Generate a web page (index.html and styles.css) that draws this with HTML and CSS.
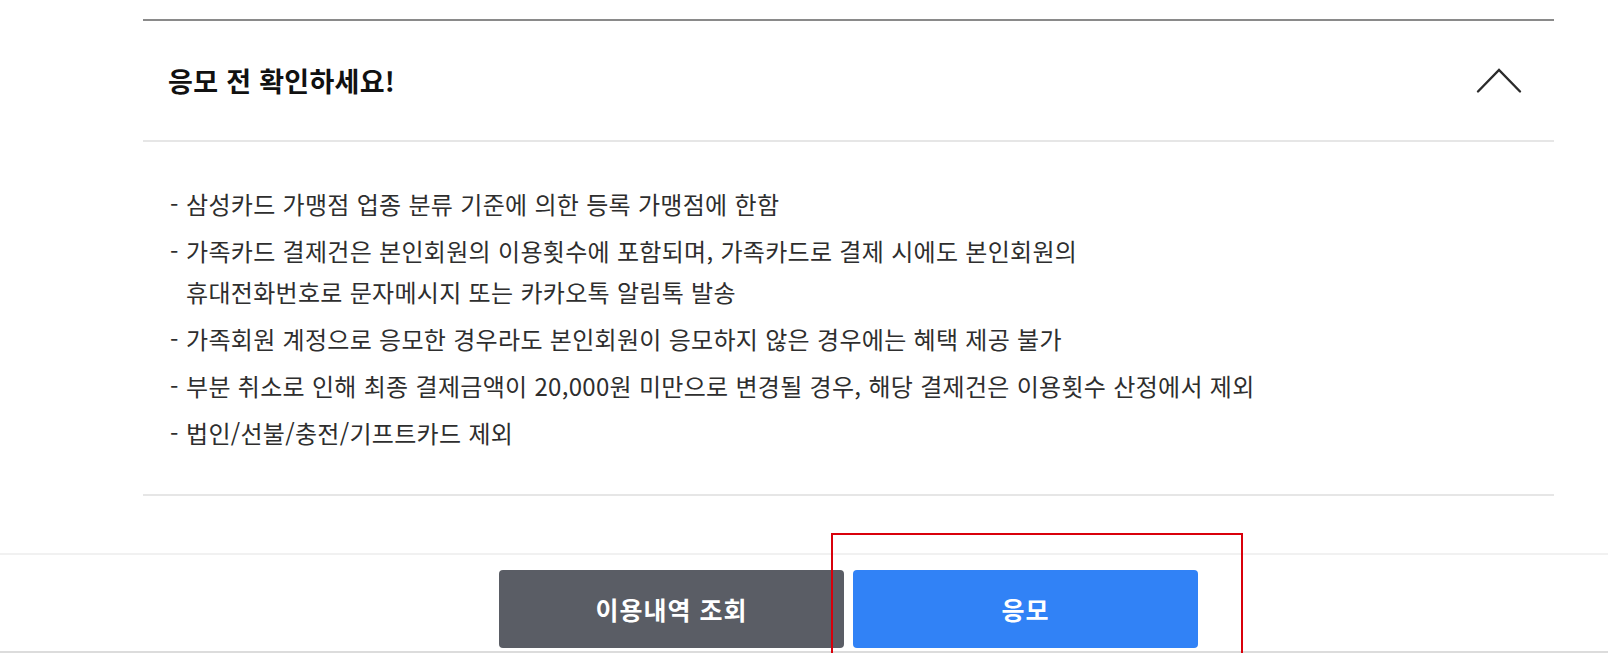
FILE: index.html
```html
<!DOCTYPE html>
<html lang="ko">
<head>
<meta charset="utf-8">
<title>응모 전 확인하세요!</title>
<link rel="stylesheet" href="styles.css">
</head>
<body>
<div class="page">
  <section class="notice">
    <div class="notice-head">
      <h2 class="notice-title">응모 전 확인하세요!</h2>
      <svg class="chevron" width="46" height="28" viewBox="0 0 46 28" aria-hidden="true">
        <polyline points="2,25.5 23,4 44,25.5" fill="none" stroke="#2b2b2b" stroke-width="2.4" stroke-linecap="round" stroke-linejoin="miter"/>
      </svg>
    </div>
    <ul class="notice-list">
      <li><span class="dash">-</span><span class="txt">삼성카드 가맹점 업종 분류 기준에 의한 등록 가맹점에 한함</span></li>
      <li><span class="dash">-</span><span class="txt">가족카드 결제건은 본인회원의 이용횟수에 포함되며, 가족카드로 결제 시에도 본인회원의<br>휴대전화번호로 문자메시지 또는 카카오톡 알림톡 발송</span></li>
      <li><span class="dash">-</span><span class="txt">가족회원 계정으로 응모한 경우라도 본인회원이 응모하지 않은 경우에는 혜택 제공 불가</span></li>
      <li><span class="dash">-</span><span class="txt">부분 취소로 인해 최종 결제금액이 20,000원 미만으로 변경될 경우, 해당 결제건은 이용횟수 산정에서 제외</span></li>
      <li><span class="dash">-</span><span class="txt">법인/선불/충전/기프트카드 제외</span></li>
    </ul>
  </section>
  <footer class="footer">
    <div class="footer-inner">
      <button class="btn btn-gray" type="button">이용내역 조회</button>
      <button class="btn btn-blue" type="button">응모</button>
    </div>
  </footer>
  <div class="highlight"></div>
</div>
</body>
</html>
```
FILE: styles.css
```css
html, body {
  margin: 0;
  padding: 0;
  background: #ffffff;
}

body {
  font-family: "Noto Sans CJK KR", "Noto Sans", sans-serif;
  color: #333;
}

.page {
  position: relative;
  height: 653px;
  display: flex;
  flex-direction: column;
  overflow: hidden;
}

.notice {
  margin: 19px 0 0 143px;
  width: 1411px;
  border-top: 2px solid #8a8a8a;
  border-bottom: 2px solid #e6e6e6;
}

.notice-head {
  height: 119px;
  display: flex;
  align-items: center;
  justify-content: space-between;
  padding: 0 32px 0 25px;
  border-bottom: 2px solid #e6e6e6;
}

.notice-title {
  margin: 0;
  font-size: 27px;
  font-weight: 700;
  color: #111;
  letter-spacing: 0.3px;
  line-height: 1;
}

.chevron {
  display: block;
  margin-top: -1px;
}

.notice-list {
  list-style: none;
  margin: 0;
  padding: 41px 0 41px 27px;
}

.notice-list li {
  display: flex;
  font-size: 24px;
  line-height: 41px;
  letter-spacing: 0.3px;
  color: #2e2e2e;
}

.notice-list li + li {
  margin-top: 6px;
}

.dash {
  flex: 0 0 16px;
}

.footer {
  margin-top: auto;
  border-top: 2px solid #f1f1f1;
  border-bottom: 2px solid #dcdcdc;
  padding: 15px 0 3px;
}

.footer-inner {
  margin-left: 143px;
  width: 1411px;
  display: flex;
  justify-content: center;
  gap: 9px;
}

.btn {
  width: 345px;
  height: 78px;
  border: 0;
  border-radius: 4px;
  color: #fff;
  font-family: "Noto Sans CJK KR", "Noto Sans", sans-serif;
  font-size: 25px;
  font-weight: 700;
  letter-spacing: 1px;
  cursor: pointer;
}

.btn-gray {
  background: #5a5d65;
}

.btn-blue {
  background: #3182f6;
}

.highlight {
  position: absolute;
  left: 831px;
  top: 533px;
  width: 408px;
  height: 140px;
  border: 2px solid #d9000b;
  pointer-events: none;
}
```
